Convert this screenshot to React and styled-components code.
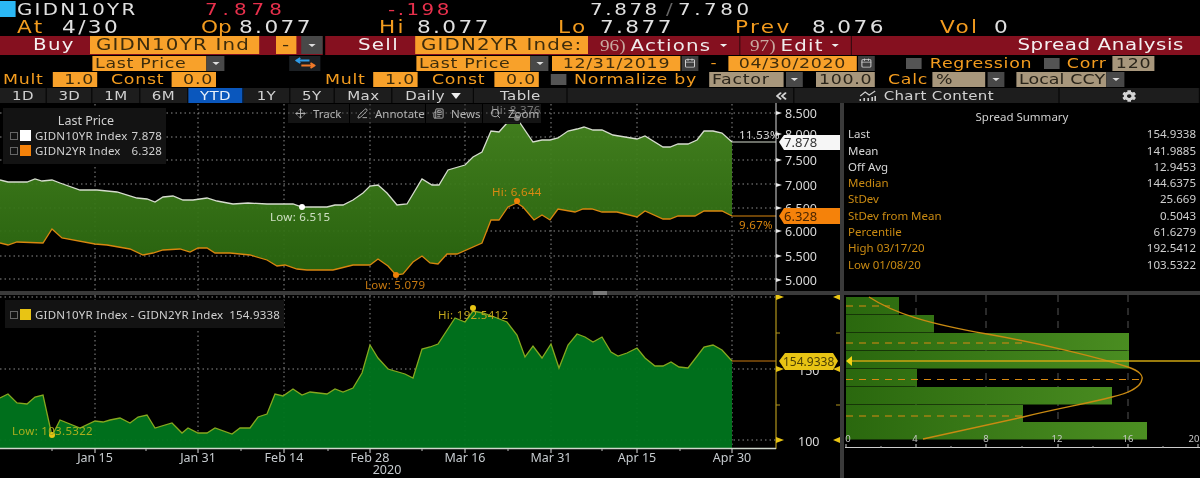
import React from "react";
import styled, { createGlobalStyle } from "styled-components";
import { Move, PenLine, Newspaper, Search, Calendar, ChevronsLeft } from "lucide-react";
import { FaCog } from "react-icons/fa";

const AMBER = "#f39c1f";
const FIELD = "#f8a12a";
const TAN = "#a8977c";
const RED = "#85101f";
const WIDE = `"DejaVu Sans", sans-serif`;
const THIN = `"Noto Sans", sans-serif`;

// the terminal font is much wider than anything installed, so the header strip is stretched
const STRETCH = 1.2;
const sx = (n) => n / STRETCH;

const tenYear = [[0,180],[8,182],[27,182],[35,179],[42,181],[52,180],[60,183],[80,190],[97,190],[117,192],[137,198],[147,199],[155,202],[163,197],[173,196],[183,200],[193,200],[207,198],[217,201],[233,204],[248,203],[267,204],[293,204],[302,207],[327,207],[335,205],[343,205],[353,200],[363,193],[370,186],[378,185],[387,193],[397,205],[407,204],[422,179],[432,185],[439,185],[448,170],[465,165],[473,157],[482,152],[491,131],[499,132],[507,123],[520,123],[533,142],[542,140],[550,140],[558,138],[568,131],[577,129],[584,127],[593,130],[602,130],[613,135],[637,139],[645,136],[663,147],[670,147],[678,144],[688,144],[697,140],[704,131],[713,131],[722,133],[732,142]];
const twoYear = [[0,243],[8,245],[17,242],[43,243],[52,229],[62,238],[95,244],[107,245],[130,249],[143,255],[153,253],[163,250],[180,249],[190,252],[198,248],[207,248],[215,253],[230,253],[250,255],[267,260],[277,266],[285,265],[297,269],[307,270],[333,270],[353,265],[370,265],[378,259],[388,266],[396,275],[403,274],[413,262],[422,256],[430,263],[438,264],[447,254],[457,254],[482,243],[491,220],[499,220],[508,207],[517,203],[523,207],[534,220],[542,215],[550,220],[558,209],[575,212],[583,209],[592,209],[602,212],[617,212],[637,217],[645,211],[663,219],[670,219],[678,216],[695,216],[704,211],[722,211],[732,216]];
const spread = [[0,398],[8,394],[17,403],[27,404],[35,397],[43,395],[52,436],[60,420],[80,428],[95,421],[103,422],[110,420],[120,418],[130,423],[138,417],[147,415],[155,428],[172,423],[182,433],[188,428],[198,433],[207,433],[215,428],[232,434],[240,428],[250,428],[258,417],[267,414],[275,394],[283,396],[293,389],[302,395],[310,392],[327,394],[335,389],[343,392],[353,388],[362,373],[370,345],[378,358],[388,369],[405,374],[413,378],[422,349],[430,347],[438,344],[455,318],[465,322],[473,311],[483,313],[497,318],[507,322],[517,335],[525,357],[533,346],[542,358],[551,344],[559,368],[568,345],[577,334],[585,337],[593,342],[602,337],[611,352],[618,356],[627,353],[637,348],[645,358],[655,366],[663,366],[671,362],[679,367],[688,368],[704,347],[713,345],[722,350],[732,361]];
const bell = "M869 297 C895 314 930 324 987 334 S1100 358 1128 367 C1140 371 1143 376 1142 379 C1141 388 1125 394 1112 397 C1085 404 1060 408 1023 417 L923 439";

const bars = [[297,899],[315,934],[333,1129],[351,1129],[369,917],[387,1112],[405,1023],[422,1147]];
const gridX = [95,198,284,370,465,551,637,732];
const minorX = [52,146,241,328,422,508,602,680];
const upperY = [113,137,160,184,208,231,256,279];
const upperAxis = [["8.500",113],["8.000",134],["7.500",160],["7.000",185],["6.500",208],["6.000",231],["5.500",256],["5.000",280]];
const dateLabels = [["Jan 15",95],["Jan 31",198],["Feb 14",284],["Feb 28",370],["Mar 16",465],["Mar 31",551],["Apr 15",637],["Apr 30",732]];

const pts = (list) => list.map((p) => p.join(",")).join(" ");
const band = pts(tenYear) + " " + pts([...twoYear].reverse());
const spreadArea = pts(spread) + " 732,448 0,448";

const summary = [
  ["Last", "154.9338"],
  ["Mean", "141.9885"],
  ["Off Avg", "12.9453"],
  ["Median", "144.6375", true],
  ["StDev", "25.669", true],
  ["StDev from Mean", "0.5043", true],
  ["Percentile", "61.6279", true],
  ["High 03/17/20", "192.5412", true],
  ["Low 01/08/20", "103.5322", true],
];

const tabs = [["1D",47],["3D",46],["1M",47],["6M",48],["YTD",56,true],["1Y",46],["5Y",45],["Max",58]];

export default function App() {
  return (
    <Page>
      <GlobalStyle />
      <Header>
        <TopRow>
          <Flag />
          <TopQuote $w={188} $ls={1.9}>GIDN10YR</TopQuote>
          <TopQuote $w={183} $ls={4.2} $color="#e8304c">7.878</TopQuote>
          <TopQuote $w={202} $ls={2.1} $color="#e8304c">-.198</TopQuote>
          <TopQuote $w={76} $ls={2.2}>7.878</TopQuote>
          <TopQuote $w={12} $ls={0} $color="#666">/</TopQuote>
          <TopQuote $w={90} $ls={3}>7.780</TopQuote>
        </TopRow>
        <StatRow>
          <Quote $w={45} $color={AMBER}>At</Quote>
          <Quote $w={139}>4/30</Quote>
          <Quote $w={38} $ls={0} $color={AMBER}>Op</Quote>
          <Quote $w={140}>8.077</Quote>
          <Quote $w={38} $color={AMBER}>Hi</Quote>
          <Quote $w={141}>8.077</Quote>
          <Quote $w={42} $color={AMBER}>Lo</Quote>
          <Quote $w={135}>7.877</Quote>
          <Quote $w={77} $color={AMBER}>Prev</Quote>
          <Quote $w={128}>8.076</Quote>
          <Quote $w={54} $color={AMBER}>Vol</Quote>
          <Quote $w={30}>0</Quote>
        </StatRow>

        <ActionBar>
          <BarLabel $w={90}>Buy</BarLabel>
          <BigField $w={169}>GIDN10YR Ind</BigField>
          <Gap $w={17} />
          <BigField $w={20}>-</BigField>
          <Gap $w={5} />
          <DropButton $w={22} $h={18} />
          <BlackGap />
          <BarLabel $w={90}>Sell</BarLabel>
          <BigField $w={173}>GIDN2YR Inde:</BigField>
          <Gap $w={12} />
          <MenuItem $w={141}><Num>96)</Num>Actions<Caret /></MenuItem>
          <MenuItem $w={111} $pad={9}><Num>97)</Num>Edit<Caret /></MenuItem>
          <BarTitle>Spread Analysis</BarTitle>
        </ActionBar>

        <FormRow>
          <Gap $w={92} />
          <Field $w={114}>Last Price</Field>
          <DropButton $w={18} $gap={1} />
          <SwapButton>
            <svg width="17" height="12" viewBox="0 0 20 12" preserveAspectRatio="none">
              <path d="M5 1 1 3.5 5 6M1 3.5h13" stroke="#2f9be8" strokeWidth="1.8" fill="none" />
              <path d="M15 6l4 2.5-4 2.5M19 8.5H6" stroke="#f07828" strokeWidth="1.8" fill="none" />
            </svg>
          </SwapButton>
          <Gap $w={95} />
          <Field $w={114}>Last Price</Field>
          <DropButton $w={18} $gap={1} />
          <Gap $w={3} />
          <Field $w={129} $align="center">12/31/2019</Field>
          <CalButton><Calendar size={10} strokeWidth={2} /></CalButton>
          <Dash>-</Dash>
          <Field $w={129} $align="center">04/30/2020</Field>
          <CalButton><Calendar size={10} strokeWidth={2} /></CalButton>
          <Gap $w={31} />
          <Check />
          <Label $w={122} $pad={8}>Regression</Label>
          <Check />
          <Label $w={53} $pad={7}>Corr</Label>
          <Field $w={41} $tone="tan" $align="center">120</Field>
        </FormRow>

        <FormRow>
          <Label $w={53} $pad={3}>Mult</Label>
          <Field $w={44} $align="right">1.0</Field>
          <Label $w={75} $pad={14}>Const</Label>
          <Field $w={44} $align="right">0.0</Field>
          <Gap $w={109} />
          <Label $w={48}>Mult</Label>
          <Field $w={45} $align="right">1.0</Field>
          <Label $w={76} $pad={14}>Const</Label>
          <Field $w={45} $align="right">0.0</Field>
          <Gap $w={12} />
          <Check />
          <Label $w={142} $pad={7}>Normalize by</Label>
          <Field $w={75} $tone="tan">Factor</Field>
          <DropButton $w={17} $gap={2} />
          <Gap $w={13} />
          <Field $w={59} $tone="tan" $align="right">100.0</Field>
          <Label $w={58} $pad={13}>Calc</Label>
          <Field $w={52} $tone="tan">%</Field>
          <DropButton $w={16} $gap={3} />
          <Gap $w={12} />
          <Field $w={90} $tone="tan" $ls={0.1}>Local CCY</Field>
          <DropButton $w={18} $gap={1} />
        </FormRow>

        <TabBar>
          {tabs.map(([name, w, active]) => (
            <Tab key={name} $w={w} $active={active}>{name}</Tab>
          ))}
          <Tab $w={81}>Daily <Down /></Tab>
          <Tab $w={94}>Table</Tab>
          <Tab $w={227} $end><ChevronsLeft size={14} strokeWidth={3} /></Tab>
          <Tab $w={265}>
            <svg width="15" height="12" viewBox="0 0 18 12" preserveAspectRatio="none">
              <path d="M1 6 6 2l4 3 6-4" stroke="#ccc" fill="none" strokeWidth="1.2" />
              <path d="M1 9v2M5 8v3M9 8v3M13 7v4M16 6v5" stroke="#ccc" strokeWidth="1.6" />
            </svg>
            Chart Content
          </Tab>
          <Tab $w={140}><FaCog size={12} color="#d4d4d4" /></Tab>
        </TabBar>
      </Header>

      <Workspace>
        <ChartColumn>
          <ChartBox>
            <svg width="840" height="188" viewBox="0 103 840 188">
              <defs>
                <linearGradient id="bandFill" x1="0" y1="0" x2="0" y2="1">
                  <stop offset="0" stopColor="#45851f" />
                  <stop offset="1" stopColor="#2a670f" />
                </linearGradient>
              </defs>
              {gridX.map((x) => <GridLine key={x} x1={x} x2={x} y1={104} y2={291} />)}
              {upperY.map((y) => <GridLine key={y} x1={0} x2={776} y1={y} y2={y} />)}
              <polygon points={band} fill="url(#bandFill)" opacity="0.94" />
              <polyline points={pts(twoYear)} fill="none" stroke="#d9860f" strokeWidth="1.3" />
              <polyline points={pts(tenYear)} fill="none" stroke="#d5dccd" strokeWidth="1.3" />
              <line x1={505} x2={520} y1={123} y2={123} stroke="#111" strokeWidth="2" />
              <line x1={732} x2={776} y1={142} y2={142} stroke="#d5dccd" strokeWidth="1.2" />
              <line x1={732} x2={776} y1={216} y2={216} stroke="#d9860f" strokeWidth="1.2" />
              <line x1={776} x2={776} y1={103} y2={291} stroke="#d8d8d8" />
              {upperAxis.map(([t, y]) => (
                <g key={t}>
                  <polygon points={`776,${y - 2} 782,${y} 776,${y + 2}`} fill="#e8e8e8" />
                  <AxisText x={785} y={y + 5}>{t}</AxisText>
                </g>
              ))}
              <circle cx={302} cy={207} r={3} fill="#fff" />
              <ChartNote x={270} y={221} $color="#cfe0c4">Low: 6.515</ChartNote>
              <circle cx={396} cy={275} r={3} fill="#ee8108" />
              <ChartNote x={365} y={289} $color="#c97a10">Low: 5.079</ChartNote>
              <circle cx={517} cy={201} r={3} fill="#ee8108" />
              <ChartNote x={492} y={196} $color="#d98a12">Hi: 6.644</ChartNote>
              <circle cx={517} cy={118} r={3} fill="#bbb" />
              <ChartNote x={491} y={114} $color="#b5b5b5">Hi: 8.376</ChartNote>
              <ChartNote x={739} y={139} $color="#d8d8d8">11.53%</ChartNote>
              <ChartNote x={739} y={229} $color="#d9860f">9.67%</ChartNote>
              <polygon points="779,142 784,135 840,135 840,150 784,150" fill="#f6f6f6" />
              <TagText x={784} y={147} $color="#333">7.878</TagText>
              <polygon points="779,216 784,208 840,208 840,224 784,224" fill="#f5820a" />
              <TagText x={784} y={221} $color="#4a2500">6.328</TagText>
            </svg>
            <Legend>
              <LegendHead>Last Price</LegendHead>
              <LegendRow><Expander /><Swatch $color="#fff" /><span>GIDN10YR Index</span><b>7.878</b></LegendRow>
              <LegendRow><Expander /><Swatch $color="#f5820a" /><span>GIDN2YR Index</span><b>6.328</b></LegendRow>
            </Legend>
            <Toolbar>
              <ToolButton $w={62}><Move size={11} />Track</ToolButton>
              <ToolButton $w={76}><PenLine size={11} />Annotate</ToolButton>
              <ToolButton $w={57}><Newspaper size={11} />News</ToolButton>
              <ToolButton $w={59}><Search size={11} />Zoom</ToolButton>
            </Toolbar>
          </ChartBox>
          <Splitter><Grip /></Splitter>
          <SpreadBox>
            <svg width="840" height="183" viewBox="0 295 840 183">
              {gridX.map((x) => <GridLine key={x} x1={x} x2={x} y1={295} y2={448} />)}
              {[297, 369, 440].map((y) => <GridLine key={y} x1={0} x2={776} y1={y} y2={y} />)}
              <polygon points={spreadArea} fill="#00741d" opacity="0.96" />
              <polyline points={pts(spread)} fill="none" stroke="#86a81e" strokeWidth="1.3" />
              <line x1={732} x2={776} y1={361} y2={361} stroke="#c97a10" strokeWidth="1.2" />
              <line x1={776} x2={776} y1={295} y2={449} stroke="#b3961c" strokeWidth="1.2" />
              <line x1={0} x2={776} y1={448.5} y2={448.5} stroke="#cfd6cc" strokeWidth="1.3" />
              {gridX.map((x) => <line key={x} x1={x} x2={x} y1={449} y2={453} stroke="#ddd" />)}
              {minorX.map((x) => <line key={x} x1={x} x2={x} y1={449} y2={451} stroke="#bbb" />)}
              {[297, 369, 440].map((y) => (
                <g key={y}>
                  <polygon points={`776,${y - 3} 784,${y} 776,${y + 3}`} fill="#e8c414" />
                  <polygon points={`840,${y - 3} 833,${y} 840,${y + 3}`} fill="#e8c414" />
                </g>
              ))}
              {[333, 405].map((y) => (
                <g key={y}>
                  <line x1={776} x2={780} y1={y} y2={y} stroke="#b3961c" />
                  <line x1={836} x2={840} y1={y} y2={y} stroke="#b3961c" />
                </g>
              ))}
              <AxisText x={798} y={375}>150</AxisText>
              <AxisText x={798} y={446}>100</AxisText>
              <circle cx={52} cy={435} r={3} fill="#e8c414" />
              <ChartNote x={12} y={435} $color="#a9ae1e">Low: 103.5322</ChartNote>
              <circle cx={473} cy={308} r={3} fill="#e8c414" />
              <ChartNote x={438} y={319} $color="#c2a61c">Hi: 192.5412</ChartNote>
              <polygon points="779,361 785,353 833,353 838,361 833,370 785,370" fill="#e8c414" />
              <TagText x={783} y={366} $size={12} $color="#4b3f05">154.9338</TagText>
              {dateLabels.map(([t, x]) => <DateText key={t} x={x} y={462}>{t}</DateText>)}
              <DateText x={387} y={474}>2020</DateText>
            </svg>
            <Legend $wide>
              <LegendRow><Expander /><Swatch $color="#e8c414" /><span>GIDN10YR Index - GIDN2YR Index</span><b>154.9338</b></LegendRow>
            </Legend>
          </SpreadBox>
        </ChartColumn>
        <SideColumn>
          <SummaryBox>
            <SummaryTitle>Spread Summary</SummaryTitle>
            {summary.map(([name, value, amber]) => (
              <SummaryRow key={name}>
                <SummaryName $amber={amber}>{name}</SummaryName>
                <span>{value}</span>
              </SummaryRow>
            ))}
          </SummaryBox>
          <Splitter />
          <svg width="356" height="183" viewBox="844 295 356 183">
            <defs>
              <linearGradient id="barFill" x1="846" y1="0" x2="1147" y2="0" gradientUnits="userSpaceOnUse">
                <stop offset="0" stopColor="#2a680e" />
                <stop offset="1" stopColor="#4c8f22" />
              </linearGradient>
            </defs>
            {[916, 986, 1058, 1128].map((x) => (
              <line key={x} x1={x} x2={x} y1={295} y2={440} stroke="#555" strokeDasharray="7 6" />
            ))}
            {bars.map(([y, r]) => (
              <rect key={y} x={846} y={y} width={r - 846} height={17.5} fill="url(#barFill)" />
            ))}
            {[[306, 890], [343, 1022], [379.5, 1140], [416, 1022]].map(([y, r]) => (
              <line key={y} x1={846} x2={r} y1={y} y2={y} stroke="#d98a12" strokeWidth="1.2" strokeDasharray="7 6" />
            ))}
            <path d={bell} fill="none" stroke="#c98a12" strokeWidth="1.4" />
            <line x1={850} x2={1200} y1={361} y2={361} stroke="#cda512" strokeWidth="1.3" />
            <polygon points="846,361 852,356 852,366" fill="#f2d414" />
            <line x1={845} x2={1200} y1={447.5} y2={447.5} stroke="#ccc" />
            {[846, 916, 986, 1058, 1128, 1198].map((x) => (
              <line key={x} x1={x} x2={x} y1={444} y2={448} stroke="#ccc" />
            ))}
            {[881, 951, 1022, 1093, 1163].map((x) => (
              <line key={x} x1={x} x2={x} y1={446} y2={448} stroke="#aaa" />
            ))}
            {[["0", 848], ["4", 915], ["8", 986], ["12", 1057], ["16", 1128], ["20", 1194]].map(([t, x]) => (
              <HistText key={t} x={x} y={442}>{t}</HistText>
            ))}
          </svg>
        </SideColumn>
      </Workspace>
    </Page>
  );
}

const GlobalStyle = createGlobalStyle`
  html, body { margin: 0; background: #000; overflow: hidden; }
  svg { display: block; }
`;

const Page = styled.div`
  width: 1200px;
  height: 478px;
  overflow: hidden;
  background: #000;
  color: #ddd;
  filter: blur(0.4px);
`;

const Header = styled.div`
  width: ${sx(1200)}px;
  transform: scaleX(${STRETCH});
  transform-origin: left top;
`;

const QuoteRow = styled.div`
  display: flex;
  height: 17px;
  align-items: center;
`;

const TopRow = styled(QuoteRow)`
  box-sizing: border-box;
  padding-top: 2px;
`;

const StatRow = styled(QuoteRow)`
  height: 19px;
  padding-left: ${sx(17)}px;
`;

const Flag = styled.div`
  width: ${sx(15)}px;
  height: 16px;
  margin: -2px ${sx(2)}px 0 0;
  background: #2bb8f5;
`;

const Quote = styled.span`
  width: ${(p) => sx(p.$w)}px;
  flex: none;
  font: 18px/17px ${WIDE};
  letter-spacing: ${(p) => p.$ls ?? 2}px;
  color: ${(p) => p.$color || "#e0e0e0"};
  white-space: nowrap;
`;

const TopQuote = styled(Quote)`
  font-size: 16.5px;
`;

const ActionBar = styled.div`
  display: flex;
  height: 19px;
  align-items: stretch;
  background: ${RED};
`;

const BarLabel = styled.div`
  width: ${(p) => sx(p.$w)}px;
  box-sizing: border-box;
  padding-left: ${sx(33)}px;
  color: #f4f0f0;
  font: 16.5px/18px ${WIDE};
  letter-spacing: 1.1px;
`;

const BigField = styled.div`
  width: ${(p) => sx(p.$w)}px;
  height: 18px;
  box-sizing: border-box;
  padding-left: ${sx(6)}px;
  background: ${FIELD};
  color: #3d2c0c;
  font: 16.5px/18px ${WIDE};
  letter-spacing: 1px;
  white-space: nowrap;
  overflow: hidden;
`;

const Gap = styled.div`
  width: ${(p) => sx(p.$w)}px;
  flex: none;
`;

const BlackGap = styled.div`
  width: ${sx(2)}px;
  flex: none;
  background: #000;
`;

const DropButton = styled.div`
  width: ${(p) => sx(p.$w)}px;
  height: ${(p) => p.$h || 15}px;
  flex: none;
  margin-left: ${(p) => sx(p.$gap || 0)}px;
  display: flex;
  align-items: center;
  justify-content: center;
  background: #484848;
  &::after {
    content: "";
    border-left: 3px solid transparent;
    border-right: 3px solid transparent;
    border-top: 3px solid #ddd;
  }
`;

const MenuItem = styled.div`
  width: ${(p) => sx(p.$w)}px;
  flex: none;
  box-sizing: border-box;
  display: flex;
  align-items: center;
  gap: ${sx(5)}px;
  border-right: ${sx(2)}px solid #3a0a10;
  color: #f0ecec;
  font: 16.5px/18px ${WIDE};
  letter-spacing: 1px;
  padding: 0 ${sx(12)}px 0 ${(p) => sx(p.$pad || 0)}px;
`;

const Num = styled.span`
  font: 16px "Liberation Serif", serif;
  letter-spacing: 0;
  color: #c9a9a0;
`;

const Caret = styled.span`
  margin-left: auto;
  border-left: 3px solid transparent;
  border-right: 3px solid transparent;
  border-top: 3px solid #eee;
`;

const BarTitle = styled.div`
  flex: 1;
  text-align: right;
  padding-right: ${sx(16)}px;
  color: #f4f0f0;
  font: 16.5px/18px ${WIDE};
  letter-spacing: 0.5px;
  white-space: nowrap;
`;

const FormRow = styled.div`
  display: flex;
  height: 16px;
  align-items: center;
`;

const Field = styled.div`
  width: ${(p) => sx(p.$w)}px;
  height: 15px;
  flex: none;
  box-sizing: border-box;
  padding: 0 ${sx(3)}px;
  text-align: ${(p) => p.$align || "left"};
  background: ${(p) => (p.$tone === "tan" ? TAN : FIELD)};
  color: ${(p) => (p.$tone === "tan" ? "#29241a" : "#3d2c0c")};
  font: 14.5px/15px ${WIDE};
  letter-spacing: ${(p) => p.$ls ?? 0.6}px;
  white-space: nowrap;
  overflow: hidden;
`;

const Label = styled.div`
  width: ${(p) => sx(p.$w)}px;
  flex: none;
  box-sizing: border-box;
  padding-left: ${(p) => sx(p.$pad || 0)}px;
  color: ${AMBER};
  font: 14.5px/15px ${WIDE};
  letter-spacing: 0.6px;
  white-space: nowrap;
`;

const SwapButton = styled.div`
  width: ${sx(32)}px;
  height: 15px;
  flex: none;
  margin-left: ${sx(64)}px;
  display: flex;
  align-items: center;
  justify-content: center;
  background: #1c2024;
`;

const CalButton = styled.div`
  width: ${sx(17)}px;
  height: 15px;
  flex: none;
  margin-left: ${sx(1)}px;
  display: flex;
  align-items: center;
  justify-content: center;
  background: #3e3e3e;
  color: #d0d0d0;
`;

const Dash = styled.div`
  width: ${sx(29)}px;
  flex: none;
  text-align: center;
  color: ${AMBER};
  font: 14px ${WIDE};
`;

const Check = styled.div`
  width: ${sx(16)}px;
  height: 11px;
  flex: none;
  background: #545454;
`;

const TabBar = styled.div`
  display: flex;
  height: 15px;
  margin-top: 1px;
  background: #1d1d1d;
`;

const Tab = styled.div`
  width: ${(p) => sx(p.$w)}px;
  flex: none;
  box-sizing: border-box;
  display: flex;
  align-items: center;
  justify-content: ${(p) => (p.$end ? "flex-end" : "center")};
  gap: ${sx(6)}px;
  padding-right: ${(p) => (p.$end ? sx(4) : 0)}px;
  border-right: ${sx(1)}px solid #070707;
  background: ${(p) => (p.$active ? "#0a57bd" : "transparent")};
  color: ${(p) => (p.$active ? "#e8f0fa" : "#d2d2d2")};
  font: 12.5px/15px ${WIDE};
  letter-spacing: 0.3px;
`;

const Down = styled.span`
  border-left: 4px solid transparent;
  border-right: 4px solid transparent;
  border-top: 6px solid #eee;
`;

const Workspace = styled.div`
  display: grid;
  grid-template-columns: 840px 360px;
  height: 375px;
`;

const ChartColumn = styled.div`
  display: flex;
  flex-direction: column;
`;

const SideColumn = styled.div`
  display: flex;
  flex-direction: column;
  border-left: 4px solid #3a3a3a;
`;

const ChartBox = styled.div`
  position: relative;
  height: 188px;
`;

const SpreadBox = styled.div`
  position: relative;
  height: 183px;
`;

const Splitter = styled.div`
  height: 4px;
  flex: none;
  display: flex;
  justify-content: center;
  background: #3a3a3a;
`;

const Grip = styled.div`
  width: 14px;
  margin-left: 360px;
  background: #777;
`;

const GridLine = styled.line`
  stroke: #8c8c8c;
  stroke-width: 1;
  stroke-dasharray: 1.5 3;
`;

const AxisText = styled.text`
  font: 12.5px ${THIN};
  fill: #d8d8d8;
`;

const ChartNote = styled.text`
  font: 11.5px ${THIN};
  letter-spacing: 0.3px;
  fill: ${(p) => p.$color};
`;

const TagText = styled.text`
  font: ${(p) => p.$size || 13}px ${THIN};
  fill: ${(p) => p.$color};
`;

const DateText = styled.text`
  font: 12.5px ${THIN};
  text-anchor: middle;
  fill: #c6cbcf;
`;

const HistText = styled.text`
  font: 9.5px ${THIN};
  text-anchor: middle;
  fill: #c8c8c8;
`;

const Legend = styled.div`
  position: absolute;
  left: ${(p) => (p.$wide ? 5 : 3)}px;
  top: 5px;
  width: ${(p) => (p.$wide ? 279 : 163)}px;
  box-sizing: border-box;
  padding: ${(p) => (p.$wide ? "7px 4px 6px 5px" : "5px 4px 6px 7px")};
  background: #131313;
  color: #d0d0d0;
  font: 11.5px/15px ${THIN};
`;

const LegendHead = styled.div`
  text-align: center;
  font-size: 12.5px;
`;

const LegendRow = styled.div`
  display: flex;
  align-items: center;
  gap: 2px;
  span { flex: 1; margin-left: 2px; white-space: nowrap; letter-spacing: 0.2px; }
  b { font-weight: 400; letter-spacing: 0.2px; }
`;

const Expander = styled.i`
  width: 6px;
  height: 6px;
  border: 1px solid #666;
`;

const Swatch = styled.i`
  width: 11px;
  height: 11px;
  background: ${(p) => p.$color};
`;

const Toolbar = styled.div`
  position: absolute;
  left: 288px;
  top: 1px;
  display: flex;
  height: 19px;
  background: rgba(44, 44, 44, 0.45);
`;

const ToolButton = styled.div`
  width: ${(p) => p.$w}px;
  box-sizing: border-box;
  display: flex;
  align-items: center;
  gap: 7px;
  padding-left: 7px;
  border-right: 1px solid #000;
  color: #b4b4b4;
  font: 11.5px ${THIN};
`;

const SummaryBox = styled.div`
  height: 188px;
  flex: none;
  box-sizing: border-box;
  padding: 6px 4px 0 4px;
  font: 11.5px/16.3px ${THIN};
  color: #d0d0d0;
`;

const SummaryTitle = styled.div`
  text-align: center;
  margin-bottom: 1px;
`;

const SummaryRow = styled.div`
  display: flex;
  justify-content: space-between;
`;

const SummaryName = styled.span`
  color: ${(p) => (p.$amber ? "#c98a12" : "#d6d6d6")};
`;
